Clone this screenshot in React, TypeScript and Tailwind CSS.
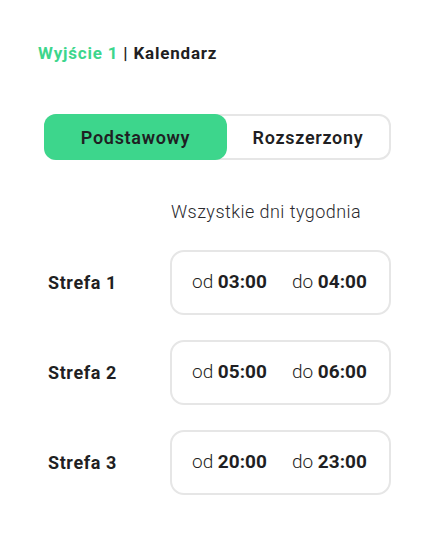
import React from 'react'

const zones = [
  { name: 'Strefa 1', from: '03:00', to: '04:00' },
  { name: 'Strefa 2', from: '05:00', to: '06:00' },
  { name: 'Strefa 3', from: '20:00', to: '23:00' },
]

export default function App() {
  return (
    <div
      className="w-[436px] h-[540px] bg-white text-[#1f1f23]"
      style={{ fontFamily: 'Roboto, "Noto Sans", sans-serif' }}
    >
      {/* Header */}
      <div className="pt-[41px] pl-[38px] text-[17px] leading-[24px] font-bold tracking-[0.8px]">
        <span className="text-[#3dd68c]">Wyjście 1</span>
        <span> | Kalendarz</span>
      </div>

      <div className="pl-[44px] pr-[45px]">
        {/* Toggle */}
        <div className="mt-[49px] h-[46px] flex rounded-[12px] border-2 border-[#e6e6e6]">
          <button className="w-[183px] -m-[2px] h-[46px] rounded-[12px] bg-[#3dd68c] text-[18px] font-semibold tracking-[0.7px] text-[#1f1f23]">
            Podstawowy
          </button>
          <button className="flex-1 ml-[2px] text-[18px] font-semibold tracking-[0.7px] text-[#1f1f23]">
            Rozszerzony
          </button>
        </div>

        <div className="mt-[40px] pl-[127px] text-[18px] leading-[24px] font-light tracking-[0.45px] text-[#2a2a2e]">
          Wszystkie dni tygodnia
        </div>

        <div className="mt-[26px] flex flex-col gap-[25px]">
          {zones.map((z) => (
            <div key={z.name} className="flex items-center">
              <div className="w-[126px] pl-[4px] text-[18px] font-bold tracking-[0.6px]">{z.name}</div>
              <div className="flex-1 h-[65px] rounded-[14px] border-2 border-[#e6e6e6] flex items-center pl-[20px] text-[19px]">
                <span className="w-[100px]">
                  <span className="font-light">od </span>
                  <span className="font-bold">{z.from}</span>
                </span>
                <span>
                  <span className="font-light">do </span>
                  <span className="font-bold">{z.to}</span>
                </span>
              </div>
            </div>
          ))}
        </div>
      </div>
    </div>
  )
}
